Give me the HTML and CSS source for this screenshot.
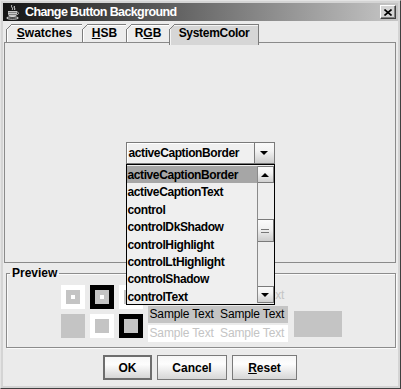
FILE: index.html
```html
<!DOCTYPE html>
<html lang="en">
<head>
<meta charset="UTF-8">
<title>Change Button Background</title>
<link rel="stylesheet" href="styles.css">
</head>
<body>
<div class="window">
    <div class="titlebar">
        <svg class="app-icon" viewBox="0 0 16 16">
            <path d="M7 1c-2 2 2 3 0 5M9.5 2c-1.5 1.5 1.5 2.5 0 4" fill="none" stroke="#e0e0e0" stroke-width="1"/>
            <path d="M3 7h9v3c0 2-2 3-4.5 3S3 12 3 10z" fill="#c8c8c8"/>
            <path d="M3.5 8.5h8M3.5 10.5h8" stroke="#707070" stroke-width="0.8"/>
            <path d="M12 8c2 0 2 2.5 0 2.5" fill="none" stroke="#c8c8c8" stroke-width="1"/>
            <ellipse cx="7.5" cy="14" rx="6" ry="1.2" fill="none" stroke="#e8e8e8" stroke-width="0.9"/>
        </svg>
        <span class="title">Change Button Background</span>
        <span class="close-btn">
            <svg viewBox="0 0 8 7" width="8" height="7"><path d="M0.5 0.5l7 6M7.5 0.5l-7 6" stroke="#000" stroke-width="1.6"/></svg>
        </span>
    </div>

    <div class="content">
        <div class="tabs">
            <div class="tab tab-swatches"><u>S</u>watches</div>
            <div class="tab tab-hsb"><u>H</u>SB</div>
            <div class="tab tab-rgb">R<u>G</u>B</div>
            <div class="tab tab-system selected">SystemColor</div>
        </div>

        <div class="tab-panel">
            <div class="combo">
                <div class="combo-value">activeCaptionBorder</div>
                <div class="combo-arrow"><span class="tri-down"></span></div>

                <div class="popup">
                    <ul class="list">
                        <li class="selected">activeCaptionBorder</li>
                        <li>activeCaptionText</li>
                        <li>control</li>
                        <li>controlDkShadow</li>
                        <li>controlHighlight</li>
                        <li>controlLtHighlight</li>
                        <li>controlShadow</li>
                        <li>controlText</li>
                    </ul>
                    <div class="scrollbar">
                        <div class="sb-btn"><span class="tri-up"></span></div>
                        <div class="sb-track">
                            <div class="sb-thumb"><span class="grip"></span></div>
                        </div>
                        <div class="sb-btn"><span class="tri-down"></span></div>
                    </div>
                </div>
            </div>
        </div>

        <fieldset class="preview">
            <legend>Preview</legend>
            <div class="preview-body">
                <div class="squares">
                    <div class="sq out-white dot-white"></div>
                    <div class="sq out-black dot-white"></div>
                    <div class="sq out-white dot-black"></div>
                    <div class="sq out-gray"></div>
                    <div class="sq out-white"></div>
                    <div class="sq out-black"></div>
                </div>
                <div class="samples">
                    <div class="sample plain">Sample Text  Sample Text</div>
                    <div class="sample on-color">Sample Text  Sample Text</div>
                    <div class="sample on-white">Sample Text  Sample Text</div>
                </div>
                <div class="swatch"></div>
            </div>
        </fieldset>

        <div class="buttons">
            <button class="btn btn-ok">OK</button>
            <button class="btn btn-cancel">Cancel</button>
            <button class="btn btn-reset"><u>R</u>eset</button>
        </div>
    </div>
</div>
</body>
</html>
```

FILE: styles.css
```css
body {
    margin: 0;
    font-family: "Liberation Sans", Arial, sans-serif;
    font-size: 12px;
    color: #000;
    background: #d4d4d4;
}
.window {
    width: 401px;
    height: 389px;
    box-sizing: border-box;
    border: 1px solid;
    border-color: #e4e4e4 #404040 #404040 #e4e4e4;
    padding: 2px;
    background: #d4d4d4;
    display: flex;
    flex-direction: column;
}

/* title bar */
.titlebar {
    height: 18px;
    flex: none;
    display: flex;
    align-items: center;
    padding-left: 2px;
    background: linear-gradient(to right, #141414, #c6c6c6);
    color: #fff;
}
.app-icon {
    width: 16px;
    height: 16px;
    margin-right: 4px;
}
.title {
    flex: 1;
    font-weight: bold;
    font-size: 12.5px;
    letter-spacing: -0.6px;
}
.close-btn {
    width: 16px;
    height: 14px;
    box-sizing: border-box;
    margin-right: 2px;
    display: flex;
    align-items: center;
    justify-content: center;
    background: #d4d4d4;
    border: 1px solid;
    border-color: #fff #404040 #404040 #fff;
    box-shadow: inset -1px -1px #808080;
}

.content {
    flex: 1;
    background: #ebebeb;
    padding: 3px 2px 0 1px;
    display: flex;
    flex-direction: column;
}

/* tabs */
.tabs {
    height: 18px;
    display: flex;
    align-items: flex-start;
    padding-left: 2px;
}
.tab {
    position: relative;
    height: 18px;
    box-sizing: border-box;
    border-top: 1px solid #7c7c7c;
    border-left: 1px solid #7c7c7c;
    background: #ececec;
    box-shadow: inset 1px 1px #fff;
    font-weight: bold;
    line-height: 17px;
    text-align: center;
}
.tab::before {
    content: "";
    position: absolute;
    top: -1px;
    left: -1px;
    width: 6px;
    height: 6px;
    background: linear-gradient(to bottom right, #ebebeb calc(50% - 0.6px), #7c7c7c calc(50% - 0.6px), #7c7c7c calc(50% + 0.6px), transparent calc(50% + 0.6px));
}
.tab-swatches { width: 76px; }
.tab-hsb { width: 44px; }
.tab-rgb { width: 43px; }
.tab-system {
    width: 90px;
    border-right: 1px solid #7c7c7c;
    letter-spacing: -0.3px;
}
.tab.selected {
    z-index: 1;
    height: 21px;
    background: #d6d6d6;
    box-shadow: inset 1px 1px #f4f4f4;
}

.tab-panel {
    height: 221px;
    box-sizing: border-box;
    border: 1px solid #8a8a8a;
    display: flex;
    align-items: center;
    justify-content: center;
    padding-top: 1px;
}

/* combo box */
.combo {
    position: relative;
    width: 149px;
    height: 22px;
    box-sizing: border-box;
    border: 1px solid #7a7a7a;
    display: flex;
    background: #f0f0f0;
}
.combo-value {
    flex: 1;
    padding-left: 2px;
    line-height: 20px;
    font-weight: bold;
    letter-spacing: -0.4px;
    box-shadow: inset 1px 1px #fff;
}
.combo-arrow {
    width: 19px;
    border-left: 1px solid #7a7a7a;
    background: linear-gradient(#fafafa, #f2f2f2 40%, #cdcdcd);
    display: flex;
    align-items: center;
    justify-content: center;
}
.tri-down {
    width: 0;
    height: 0;
    border-left: 4px solid transparent;
    border-right: 4px solid transparent;
    border-top: 4px solid #000;
}
.tri-up {
    width: 0;
    height: 0;
    border-left: 4px solid transparent;
    border-right: 4px solid transparent;
    border-bottom: 4px solid #000;
}

/* popup list */
.popup {
    position: absolute;
    top: 21px;
    left: -1px;
    z-index: 10;
    width: 149px;
    height: 141px;
    box-sizing: border-box;
    border: 1px solid #000;
    background: #efefef;
    display: flex;
}
.list {
    flex: 1;
    margin: 0;
    padding: 1px 0 0;
    list-style: none;
}
.list li {
    height: 17.4px;
    line-height: 18px;
    padding-left: 1px;
    font-weight: bold;
    letter-spacing: -0.4px;
    white-space: nowrap;
}
.list li.selected {
    background: #a6a6a6;
}
.scrollbar {
    width: 17px;
    margin: 1px 0;
    box-sizing: border-box;
    display: flex;
    flex-direction: column;
    border-left: 1px solid #8a8a8a;
    background: #eeeeee;
}
.sb-btn {
    height: 17px;
    box-sizing: border-box;
    border: 1px solid #7a7a7a;
    border-left: none;
    background: linear-gradient(#fafafa, #f2f2f2 40%, #d0d0d0);
    display: flex;
    align-items: center;
    justify-content: center;
}
.sb-track {
    flex: 1;
    padding-top: 36px;
}
.sb-thumb {
    height: 23px;
    box-sizing: border-box;
    border: 1px solid #7a7a7a;
    border-left: none;
    background: linear-gradient(#fbfbfb, #f0f0f0 45%, #cccccc);
    display: flex;
    align-items: center;
    justify-content: center;
}
.grip {
    width: 8px;
    height: 2px;
    border-top: 1px solid #777;
    border-bottom: 1px solid #777;
}

/* preview */
.preview {
    margin: 3px 0 0 2px;
    padding: 5px 0 5px 0;
    border: 1px solid #8c8c8c;
    box-shadow: 1px 1px #fafafa, inset 1px 1px #fafafa;
    min-width: 0;
}
.preview legend {
    margin-left: 3px;
    padding: 0 2px;
    font-weight: bold;
    line-height: 14px;
}
.preview-body {
    display: flex;
    justify-content: center;
    align-items: flex-start;
}
.squares {
    display: grid;
    grid-template-columns: repeat(3, 24px);
    grid-auto-rows: 24px;
    gap: 5px;
}
.sq {
    box-sizing: border-box;
    border: 5px solid #fff;
    background: #c4c4c4 no-repeat center / 4px 4px;
}
.out-black { border-color: #000; }
.out-gray { border-color: #c4c4c4; }
.dot-white { background-image: linear-gradient(#fff, #fff); }
.dot-black { background-image: linear-gradient(#000, #000); }
.samples {
    width: 140px;
    margin: 2px 0 0 5px;
    display: flex;
    flex-direction: column;
    gap: 2px;
}
.sample {
    height: 17px;
    line-height: 17px;
    padding-left: 2px;
    white-space: pre;
    letter-spacing: -0.15px;
}
.sample.plain { color: #c4c4c4; }
.sample.on-color { background: #c4c4c4; }
.sample.on-white { background: #fff; color: #c4c4c4; }
.swatch {
    width: 48px;
    height: 26px;
    margin: 26px 0 0 6px;
    background: #c4c4c4;
}

/* buttons */
.buttons {
    display: flex;
    justify-content: center;
    gap: 5px;
    margin-top: 7px;
}
.btn {
    height: 25px;
    box-sizing: border-box;
    border: 1px solid #7a7a7a;
    background: linear-gradient(#f6f6f6, #fdfdfd 35%, #d6d6d6);
    font-family: "Liberation Sans", Arial, sans-serif;
    font-size: 12px;
    font-weight: bold;
    color: #000;
    padding: 0;
}
.btn-ok {
    width: 49px;
    border: 2px solid #6e6e6e;
}
.btn-cancel { width: 70px; }
.btn-reset { width: 65px; }
```
